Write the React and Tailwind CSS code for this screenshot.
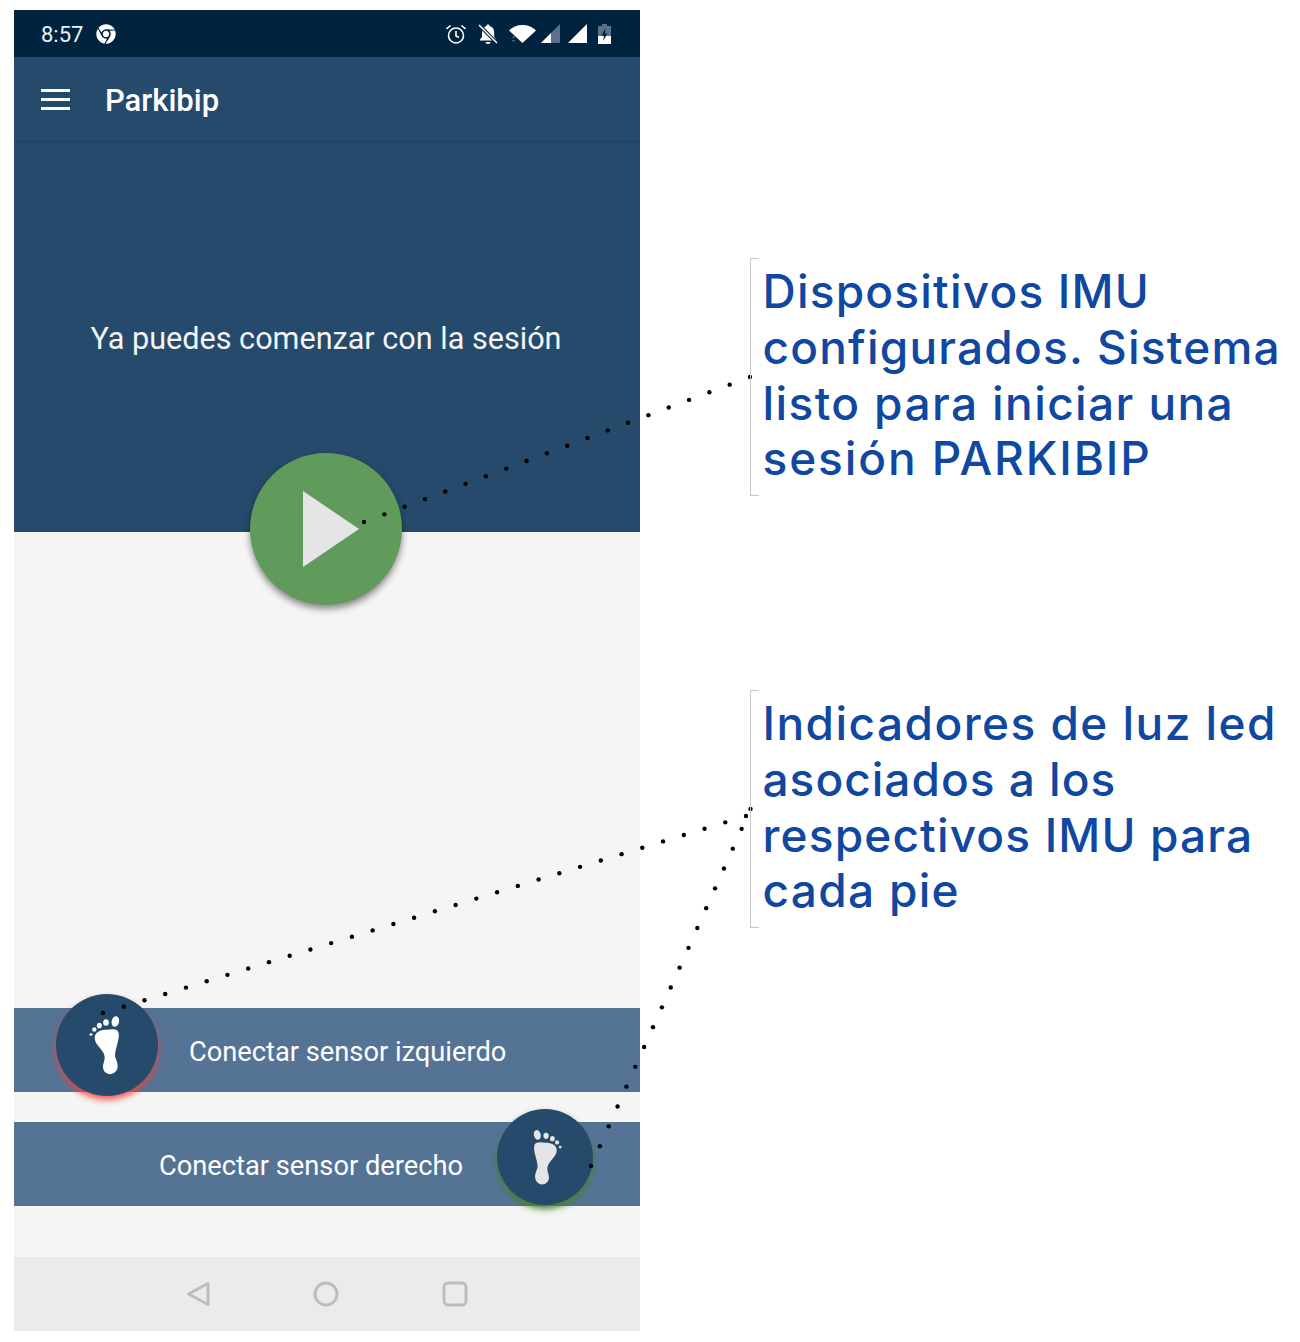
import { FaChrome } from 'react-icons/fa';

// dotted leader lines, start/end points taken from the screenshot
const leaders = [
  { from: [364, 522], to: [750, 377], steps: 19 },
  { from: [103, 1013], to: [746, 816], steps: 31 },
  { from: [591, 1166], to: [750.5, 809], steps: 18 },
];

function Foot({ className, mirrored }) {
  return (
    <svg viewBox="260 135 105 185" className={className} fill="currentColor">
      <g transform={mirrored ? 'translate(625 0) scale(-1 1)' : undefined}>
        <ellipse cx="345" cy="157" rx="11" ry="16" transform="rotate(12 345 157)" />
        <ellipse cx="317" cy="160" rx="8.5" ry="10" />
        <ellipse cx="297" cy="169" rx="7.5" ry="8.5" />
        <ellipse cx="282" cy="181" rx="6.5" ry="7" />
        <ellipse cx="272" cy="196" rx="4.5" ry="4" />
        <path d="M283 205 C284 190 300 182 318 182 C335 180 352 177 355 192 C358 212 345 235 344 258 C344 268 353 278 352 292 C351 306 340 315 330 315 C317 315 307 304 308 291 C309 279 315 272 312 258 C309 241 282 226 283 205 Z" />
      </g>
    </svg>
  );
}

function StatusIcons() {
  return (
    <div className="flex items-center">
      <svg viewBox="0 0 20 20" className="w-5 h-5 text-white ml-[1px]" fill="none" stroke="currentColor" strokeWidth="1.6">
        <circle cx="10" cy="11.500" r="7.500" />
        <path d="M10 7v5l3 1.500" />
        <path d="M0.500 5l4-3.500M19.500 5l-4-3.500" />
      </svg>
      <svg viewBox="0 0 20 20" className="w-5 h-5 ml-[12px] text-white" fill="currentColor">
        <path d="M10 0.5c1 0 1.6.7 1.6 1.6 3 .8 4.6 3.2 4.6 6.4v4.6l2 2.3v1H2v-1l2-2.3V8.500c0-3.200 1.600-5.600 4.400-6.400C8.400 1.200 9 .5 10 .5z" />
        <path d="M7.500 18h5a2.500 2 0 0 1-5 0z" />
        <path d="M1.500 1.500l17 17" stroke="#002340" strokeWidth="3.500" />
        <path d="M1 1l18 18" stroke="currentColor" strokeWidth="1.500" />
      </svg>
      <svg viewBox="0 0 27 18" className="w-[27px] h-[18px] ml-[11px] text-white" fill="currentColor">
        <path d="M0 5.500C3.500 2 8 0 13.500 0S23.500 2 27 5.500L13.500 18z" />
        <path d="M3 13l1.500-2 1.500 2zM3 15l1.500 2 1.500-2z" fill="#5a7187" />
      </svg>
      <svg viewBox="0 0 19 19" className="w-[19px] h-[19px] ml-[5px]">
        <path d="M0 19L19 0v19z" fill="#5a7187" />
        <path d="M0 19l10-10v10z" fill="#fff" />
      </svg>
      <svg viewBox="0 0 19 19" className="w-[19px] h-[19px] ml-[8px]">
        <path d="M0 19L19 0v19z" fill="#fff" />
      </svg>
      <svg viewBox="0 0 13 20" className="w-[13px] h-5 ml-[11px]">
        <path d="M4 0h5v2h4v18H0V2h4z" fill="#5a7187" />
        <path d="M0 12h13v8H0z" fill="#fff" />
        <path d="M7.500 4L3.500 11.500h2.500L5 17l4.500-7.500H7z" fill="#002340" />
      </svg>
    </div>
  );
}

function Annotation({ lines }) {
  return (
    <div className="relative z-10 h-[238px] border-l border-[#c8c8c8] pl-[11.500px] pt-[6.400px] w-[540px]">
      <span className="absolute left-0 top-0 w-2 h-px bg-[#c8c8c8]" />
      <span className="absolute left-0 bottom-0 w-2 h-px bg-[#c8c8c8]" />
      <p className="font-['Inter',sans-serif] font-medium text-[46px] leading-[55.6px] text-[#0f47a1] whitespace-nowrap">
        {lines.map(([text, tracking]) => (
          <span key={text} className={`block ${tracking}`}>{text}</span>
        ))}
      </p>
    </div>
  );
}

export default function App() {
  return (
    <div className="relative flex w-[1300px] h-[1342px] overflow-hidden bg-white font-['Roboto',sans-serif]">
      {/* Phone */}
      <div className="flex flex-col w-[626px] h-[1321px] mt-[10px] ml-[14px] shrink-0 bg-[#f5f5f5]">
        <div className="flex items-center justify-between h-[47px] pl-[27px] pr-[29px] bg-[#002340] text-white">
          <div className="flex items-center gap-[13px]">
            <span className="text-[22px] leading-none text-[#eef1f4] pt-[2px]">8:57</span>
            <FaChrome className="w-5 h-5 text-white" />
          </div>
          <StatusIcons />
        </div>

        <div className="flex items-center h-[85px] pl-[27px] bg-[#264a6b] border-b border-[#21405c] text-white">
          <div className="flex flex-col gap-[6px] w-[29px]">
            <span className="h-[3px] bg-white" />
            <span className="h-[3px] bg-white" />
            <span className="h-[3px] bg-white" />
          </div>
          <span className="ml-[35px] pt-[2px] text-[31px] font-medium leading-none">Parkibip</span>
        </div>

        <div className="relative h-[390px] bg-[#264a6b] text-center pt-[176px]">
          <p className="text-[30.600px] leading-[42px] text-[#f2f4f6] pr-[2px]">Ya puedes comenzar con la sesión</p>
          <button className="absolute left-[236px] top-[311px] flex items-center justify-center w-[152px] h-[152px] rounded-full bg-[#619b5b] shadow-[0_4px_7px_rgba(0,0,0,0.45)]">
            <svg viewBox="0 0 56 76" className="w-14 h-[76px] ml-[10px]">
              <path d="M0 0L56 38 0 76z" fill="#e5e5e5" />
            </svg>
          </button>
        </div>

        <div className="flex-1 flex flex-col gap-[30px] pt-[476px]">
          <div className="relative flex items-center h-[84px] pl-[175px] pt-[5px] bg-[#557395] text-white text-[27.250px]">
            <span className="absolute left-[42px] -top-[14px] flex items-center justify-center w-[102px] h-[102px] pr-[6px] rounded-full bg-[#264a6b] shadow-[0_4px_6px_rgba(244,67,54,0.85)] text-white">
              <Foot className="w-[35px] h-[62px]" />
            </span>
            Conectar sensor izquierdo
          </div>
          <div className="relative flex items-center h-[84px] pl-[145px] pt-[5px] bg-[#557395] text-white text-[27.250px]">
            <span className="absolute left-[483px] -top-[13px] flex items-center justify-center w-[96px] h-[96px] pl-[5px] rounded-full bg-[#264a6b] shadow-[0_4px_6px_rgba(70,130,40,0.95)] text-[#e5e5e5]">
              <Foot mirrored className="w-[33px] h-[58px]" />
            </span>
            Conectar sensor derecho
          </div>
        </div>

        <div className="flex items-center h-[74px] pb-[1px] bg-[#ebebeb] pl-[172px]">
          <svg viewBox="0 0 24 26" className="w-6 h-[26px]" fill="none" stroke="#bdbdbd" strokeWidth="3" strokeLinejoin="round">
            <path d="M22 2.500L2.500 13 22 23.500z" />
          </svg>
          <svg viewBox="0 0 26 26" className="w-[26px] h-[26px] ml-[103px]" fill="none" stroke="#bdbdbd" strokeWidth="3">
            <circle cx="13" cy="13" r="11" />
          </svg>
          <svg viewBox="0 0 26 26" className="w-[26px] h-[26px] ml-[103px]" fill="none" stroke="#bdbdbd" strokeWidth="3">
            <rect x="2" y="2" width="22" height="22" rx="4" />
          </svg>
        </div>
      </div>

      {/* Annotations */}
      <div className="flex flex-col gap-[194px] ml-[110px] pt-[258px]">
        <Annotation
          lines={[
            ['Dispositivos IMU', 'tracking-[1.2px]'],
            ['configurados. Sistema', 'tracking-[1.2px]'],
            ['listo para iniciar una', 'tracking-[1.4px]'],
            ['sesión PARKIBIP', 'tracking-[1.9px]'],
          ]}
        />
        <Annotation
          lines={[
            ['Indicadores de luz led', 'tracking-[1.45px]'],
            ['asociados a los', 'tracking-[1px]'],
            ['respectivos IMU para', 'tracking-[1.15px]'],
            ['cada pie', 'tracking-[1.3px]'],
          ]}
        />
      </div>

      {/* Leader lines drawn over the phone */}
      <svg className="absolute left-0 top-0 pointer-events-none" width="1300" height="1342">
        {leaders.flatMap(({ from, to, steps }, l) =>
          Array.from({ length: steps + 1 }, (_, i) => (
            <circle
              key={`${l}-${i}`}
              cx={from[0] + ((to[0] - from[0]) * i) / steps}
              cy={from[1] + ((to[1] - from[1]) * i) / steps}
              r="2.200"
              fill="#000"
            />
          ))
        )}
      </svg>
    </div>
  );
}
